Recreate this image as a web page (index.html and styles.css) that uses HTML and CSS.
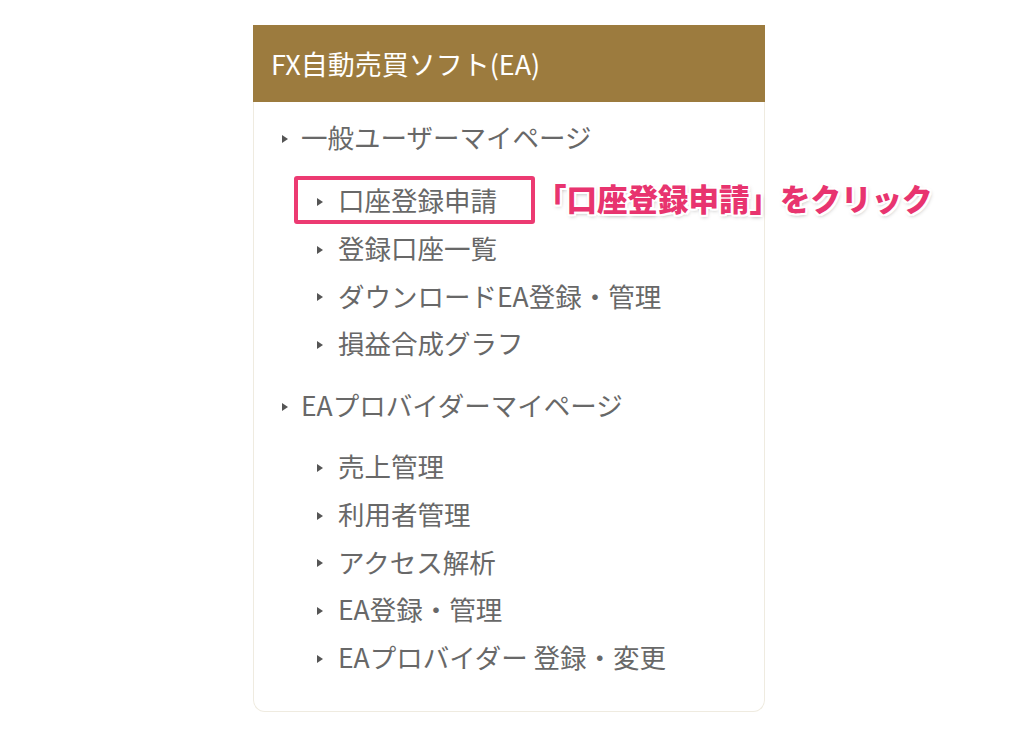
FILE: index.html
```html
<!DOCTYPE html>
<html lang="ja">
<head>
    <meta charset="UTF-8">
    <meta name="viewport" content="width=device-width, initial-scale=1.0">
    <title>FX自動売買ソフト(EA)</title>
    <link rel="stylesheet" href="styles.css">
</head>
<body>

    <div class="page">
        <div class="menu-box">
            <h2 class="menu-title">FX自動売買ソフト(EA)</h2>

            <ul class="menu">
                <li class="menu-item">
                    <span class="arrow"></span>一般ユーザーマイページ
                    <ul class="sub-menu">
                        <li class="sub-item is-marked">
                            <span class="arrow"></span>口座登録申請
                            <span class="note">「口座登録申請」をクリック</span>
                        </li>
                        <li class="sub-item"><span class="arrow"></span>登録口座一覧</li>
                        <li class="sub-item"><span class="arrow"></span>ダウンロードEA登録・管理</li>
                        <li class="sub-item"><span class="arrow"></span>損益合成グラフ</li>
                    </ul>
                </li>
                <li class="menu-item">
                    <span class="arrow"></span>EAプロバイダーマイページ
                    <ul class="sub-menu">
                        <li class="sub-item"><span class="arrow"></span>売上管理</li>
                        <li class="sub-item"><span class="arrow"></span>利用者管理</li>
                        <li class="sub-item"><span class="arrow"></span>アクセス解析</li>
                        <li class="sub-item"><span class="arrow"></span>EA登録・管理</li>
                        <li class="sub-item"><span class="arrow"></span>EAプロバイダー 登録・変更</li>
                    </ul>
                </li>
            </ul>
        </div>
    </div>

</body>
</html>
```

FILE: styles.css
```css
body {
    margin: 0;
    background-color: #ffffff;
    font-family: 'Noto Sans CJK JP', 'Noto Sans', sans-serif;
    color: #686868;
}
.page {
    padding: 25px 0 0 253px;
}
.menu-box {
    width: 510px;
    border: 1px solid #efebe0; /* 枠線 */
    border-top: none;
    border-radius: 0 0 12px 12px;
    background-color: #ffffff;
}
.menu-title {
    margin: 0 -1px;
    height: 77px;
    padding: 0 18px;
    background-color: #9c7b3e; /* 見出し背景 */
    color: #ffffff;
    font-size: 27px;
    font-weight: normal;
    line-height: 77px;
}
.menu {
    list-style: none;
    margin: 0;
    padding: 11px 0 30px 28px;
}
.menu-item {
    font-size: 26.5px;
    line-height: 48px;
}
.menu-item + .menu-item {
    margin-top: 14px;
}
.arrow {
    display: inline-block;
    width: 0;
    height: 0;
    margin-right: 13px;
    vertical-align: middle;
    position: relative;
    top: -2px;
    border-top: 4.5px solid transparent;
    border-bottom: 4.5px solid transparent;
    border-left: 6px solid #555555;
}
.sub-menu {
    list-style: none;
    margin: 15px 0 0 12px;
    padding: 0;
}
.menu-item + .menu-item .sub-menu {
    margin-top: 13px;
}
.sub-item {
    position: relative;
    width: fit-content;
    padding: 0 34px 0 19px;
    border: 4px solid transparent;
    line-height: 39.75px;
}
.sub-item .arrow {
    margin-right: 15px;
}
.is-marked {
    border-color: #ec3a72; /* 囲み枠 */
    border-radius: 3px;
}
.note {
    position: absolute;
    left: calc(100% + 5px);
    top: -1px;
    white-space: nowrap;
    color: #e8346f;
    font-size: 30.5px;
    font-weight: 900;
    text-shadow: 2px 0 0 #fff, -2px 0 0 #fff, 0 2px 0 #fff, 0 -2px 0 #fff,
        2px 2px 0 #fff, -2px -2px 0 #fff, 2px -2px 0 #fff, -2px 2px 0 #fff,
        1px 2px 4px rgba(0, 0, 0, 0.35);
}
```
